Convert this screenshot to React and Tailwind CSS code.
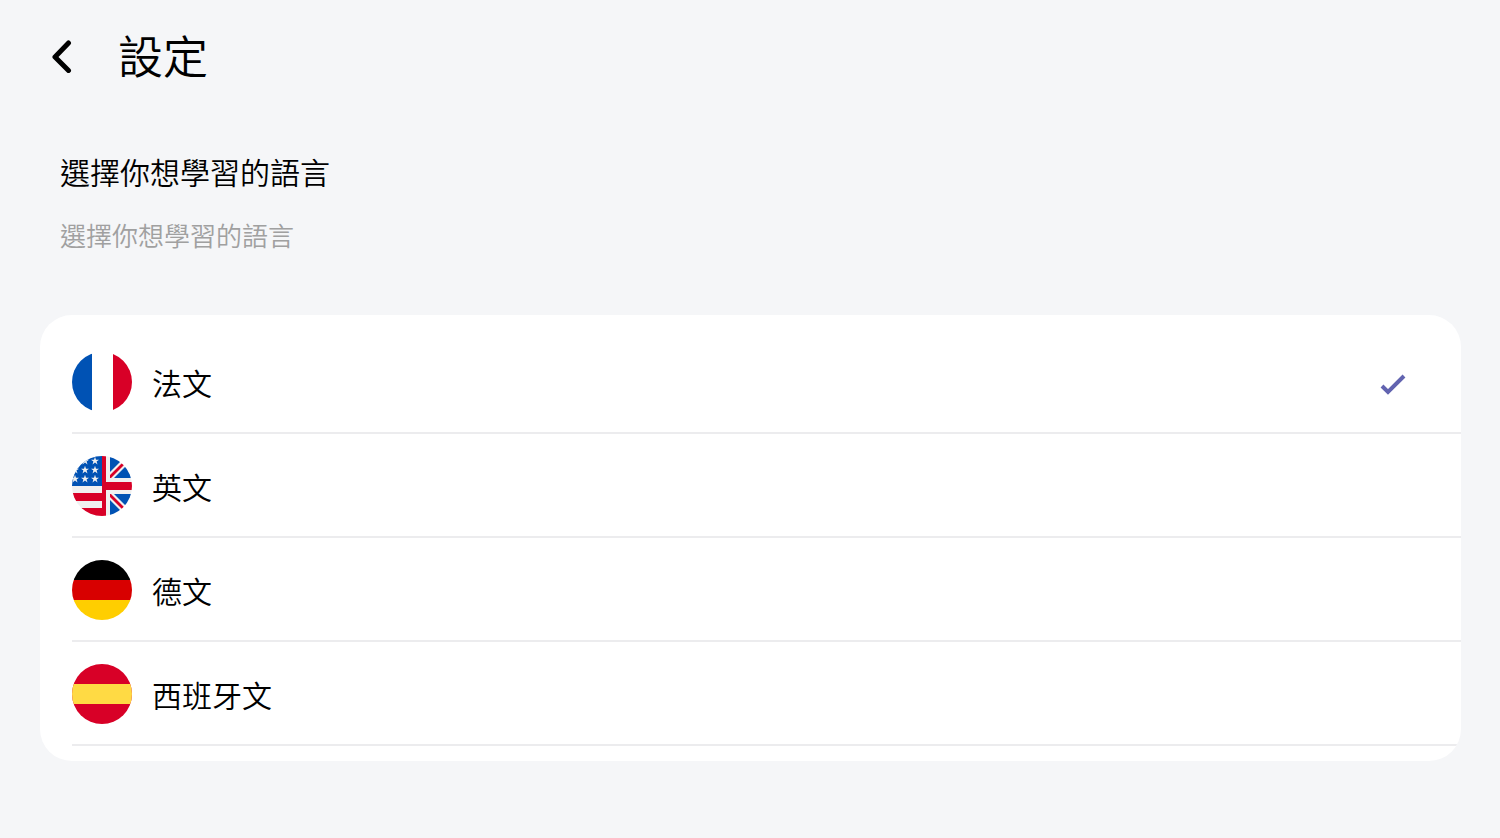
import React, { useState } from 'react';

function FranceFlag() {
  return (
    <>
      <rect width="60" height="60" fill="#fff" />
      <rect width="20" height="60" fill="#0052b4" />
      <rect x="41" width="19" height="60" fill="#d80027" />
    </>
  );
}

const stars = [
  [13, 5], [23, 5], [3, 14], [13, 14], [23, 14], [3, 23], [13, 23], [23, 23],
];

function EnglishFlag() {
  return (
    <>
      <rect width="60" height="60" fill="#f0f0f0" />
      <rect width="30" height="30" fill="#0052b4" />
      {stars.map(([x, y]) => (
        <path
          key={`${x}-${y}`}
          transform={`translate(${x} ${y})`}
          d="M0-4.2 1-1.3H4L1.6.5l.9 2.9L0 1.6l-2.5 1.8.9-2.9L-4-1.3h3z"
          fill="#f0f0f0"
        />
      ))}
      <path d="M0 37h30v8H0zM0 52h30v8H0z" fill="#d80027" />
      <path d="M38 0h16L38 16zM60 4v18H42zM38 60h16L38 44zM60 56V38H42z" fill="#0052b4" />
      <path d="M38 22v-3L52 5l2 2-15 15zM38 38v3l14 14 2-2-15-15z" fill="#d80027" />
      <path d="M30 0h4v26h26v8H34v26h-4z" fill="#d80027" />
    </>
  );
}

function GermanyFlag() {
  return (
    <>
      <rect width="60" height="20" fill="#000" />
      <rect y="20" width="60" height="20" fill="#d80000" />
      <rect y="40" width="60" height="20" fill="#ffce00" />
    </>
  );
}

function SpainFlag() {
  return (
    <>
      <rect width="60" height="60" fill="#d80027" />
      <rect y="20" width="60" height="20" fill="#ffda44" />
    </>
  );
}

const languages = [
  { id: 'fr', name: '法文', Flag: FranceFlag },
  { id: 'en', name: '英文', Flag: EnglishFlag },
  { id: 'de', name: '德文', Flag: GermanyFlag },
  { id: 'es', name: '西班牙文', Flag: SpainFlag },
];

function LanguageRow({ language, selected, onSelect }) {
  const { id, name, Flag } = language;

  return (
    <label className="relative flex h-[104px] cursor-pointer items-center gap-5 border-b-2 border-[#ececee] pt-0.5 pr-[54px]">
      <input
        type="radio"
        name="language"
        value={id}
        checked={selected}
        onChange={() => onSelect(id)}
        className="sr-only"
      />
      <svg viewBox="0 0 60 60" className="size-[60px] shrink-0 rounded-full" aria-hidden="true">
        <Flag />
      </svg>
      <span className="flex-1 text-[30px] leading-10">{name}</span>
      {selected && (
        <svg viewBox="0 0 28 32" className="h-8 w-7" fill="none" stroke="#6264b0" strokeWidth="4" aria-hidden="true">
          <path d="M3 20 9 26 25 10" />
        </svg>
      )}
    </label>
  );
}

export default function App() {
  const [selected, setSelected] = useState('fr');

  return (
    <div className="min-h-screen bg-[#f5f6f8] pt-[23px] pr-[39px] pb-10 pl-10 font-['Noto_Sans_CJK_TC',sans-serif] font-[350] text-black">
      <header className="flex h-16 items-center gap-[46px]">
        <button type="button" aria-label="返回" className="ml-2 cursor-pointer">
          <svg viewBox="0 0 24 36" className="h-9 w-6" fill="none" stroke="#000" strokeWidth="5" strokeLinecap="round" strokeLinejoin="round">
            <path d="M20.500 6 7 20l13.500 13.500" />
          </svg>
        </button>
        <h1 className="text-[45px] leading-[64px]">設定</h1>
      </header>

      <div className="px-5 pt-16">
        <h2 className="text-[30px] leading-10">選擇你想學習的語言</h2>
        <p className="mt-6 text-[26px] leading-10 text-[#a0a0a0]">選擇你想學習的語言</p>
      </div>

      <div className="mt-[60px] overflow-hidden rounded-[32px] bg-white py-[15px] pl-8">
        {languages.map((l) => (
          <LanguageRow key={l.id} language={l} selected={selected === l.id} onSelect={setSelected} />
        ))}
      </div>
    </div>
  );
}
